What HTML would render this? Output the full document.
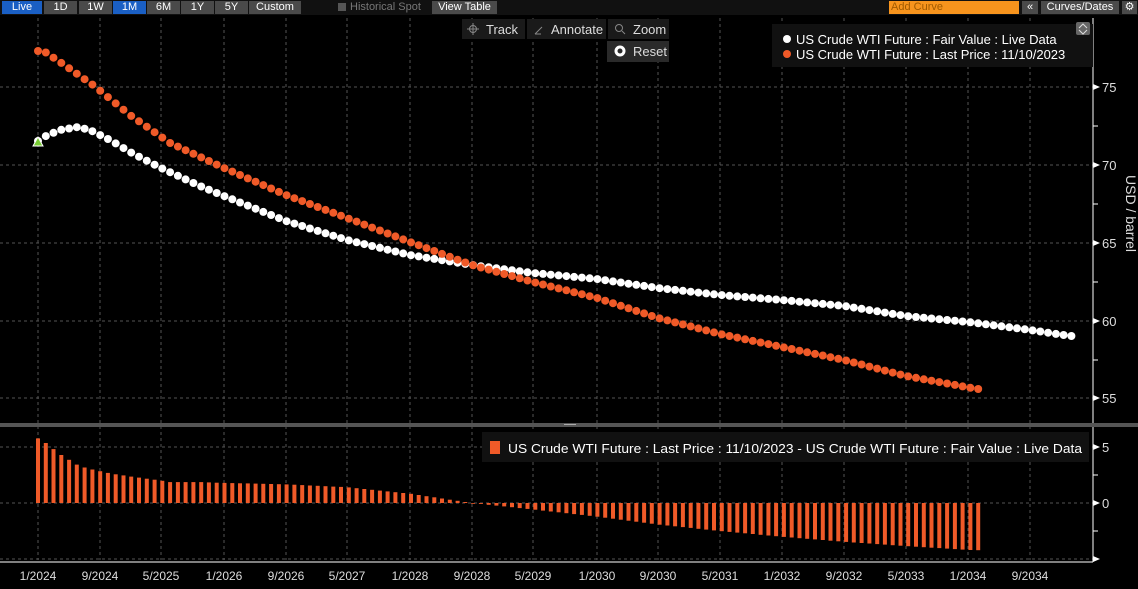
<!DOCTYPE html>
<html><head><meta charset="utf-8"><style>
body{margin:0;background:#000;width:1138px;height:589px;overflow:hidden;font-family:"Liberation Sans",sans-serif;}
.tb{position:absolute;top:0;left:0;width:1138px;height:15px;background:#111;}
.b{position:absolute;top:1px;height:13px;font-size:11px;line-height:13px;color:#fff;text-align:center;background:#4a4a4a;}
.blue{background:#1a5fc4;}
</style></head><body>
<div class="tb">
<div class="b blue" style="left:2px;width:40px">Live</div>
<div class="b" style="left:44px;width:33px">1D</div>
<div class="b" style="left:79px;width:33px">1W</div>
<div class="b blue" style="left:113px;width:33px">1M</div>
<div class="b" style="left:147px;width:33px">6M</div>
<div class="b" style="left:181px;width:33px">1Y</div>
<div class="b" style="left:215px;width:33px">5Y</div>
<div class="b" style="left:249px;width:52px">Custom</div>
<div class="b" style="left:302px;width:126px;background:#111;color:#777;text-align:left"><span style="display:inline-block;width:8px;height:8px;background:#555;margin:0 4px 0 36px;vertical-align:-1px"></span>Historical Spot</div>
<div class="b" style="left:432px;width:65px">View Table</div>
<div class="b" style="left:889px;width:130px;background:#f7941d;color:#a05a00;text-align:left;padding-left:2px;box-sizing:border-box">Add Curve</div>
<div class="b" style="left:1022px;width:16px">«</div>
<div class="b" style="left:1041px;width:78px">Curves/Dates</div>
<div class="b" style="left:1122px;width:15px">⚙</div>
</div>
<svg id="s" width="1138" height="589" style="position:absolute;top:0;left:0" font-family="Liberation Sans, sans-serif"></svg>
<script>
const s=document.getElementById('s');let h='';
const xs=[38,100,161,224,286,347,410,472,533,597,658,720,782,844,906,968,1030];
const lbl=['1/2024','9/2024','5/2025','1/2026','9/2026','5/2027','1/2028','9/2028','5/2029','1/2030','9/2030','5/2031','1/2032','9/2032','5/2033','1/2034','9/2034'];
xs.forEach((x,i)=>{h+=`<line x1="${x}" y1="18" x2="${x}" y2="560" stroke="#555" stroke-dasharray="3,3"/>`;h+=`<text x="${x}" y="580" fill="#ddd" font-size="12" text-anchor="middle">${lbl[i]}</text>`;});
[[75,87],[70,165],[65,243],[60,321],[55,398]].forEach(([v,y])=>{h+=`<line x1="0" y1="${y}" x2="1093" y2="${y}" stroke="#555" stroke-dasharray="3,3"/><path d="M1093 ${y-3}L1100 ${y}L1093 ${y+3}Z" fill="#fff"/><text x="1102" y="${y+5}" fill="#ddd" font-size="13">${v}</text>`;});
[126,204,282,360].forEach(y=>h+=`<line x1="1093" y1="${y}" x2="1098" y2="${y}" stroke="#fff"/>`);
[[5,447],[0,503]].forEach(([v,y])=>{h+=`<line x1="0" y1="${y}" x2="1093" y2="${y}" stroke="#555" stroke-dasharray="3,3"/><path d="M1093 ${y-3}L1100 ${y}L1093 ${y+3}Z" fill="#fff"/><text x="1102" y="${y+5}" fill="#ddd" font-size="13">${v}</text>`;});
h+=`<line x1="0" y1="559" x2="1093" y2="559" stroke="#555" stroke-dasharray="3,3"/><path d="M1093 556L1100 559L1093 562Z" fill="#fff"/><line x1="1093" y1="475" x2="1098" y2="475" stroke="#fff"/><line x1="1093" y1="531" x2="1098" y2="531" stroke="#fff"/>`;
h+=`<line x1="1093" y1="18" x2="1093" y2="562" stroke="#fff"/><line x1="0" y1="562" x2="1093" y2="562" stroke="#fff"/>`;
h+=`<rect x="0" y="423" width="1138" height="4" fill="#555"/><rect x="564" y="424" width="12" height="1" fill="#aaa"/>`;
h+=`<text x="1126" y="175" fill="#ddd" font-size="14" transform="rotate(90 1126 175)">USD / barrel</text>`;
function interp(p,x){for(let i=0;i<p.length-1;i++){if(x<=p[i+1][0]){const t=(x-p[i][0])/(p[i+1][0]-p[i][0]);return p[i][1]+t*(p[i+1][1]-p[i][1]);}}return p[p.length-1][1];}
const O=[[38,51],[45,52],[60,62],[93,85],[130,115],[170,143],[224,168],[286,195],[347,218],[410,242],[472,265],[533,282],[597,298],[658,318],[720,334],[782,347],[844,360],[906,376],[977,389]];
const W=[[38,141],[46,136],[60,130],[78,127],[90,130],[110,140],[130,152],[161,168],[200,186],[224,196],[286,221],[347,240],[410,255],[472,265],[533,273],[597,279],[658,288],[720,295],[782,300],[844,306],[906,316],[968,322],[1030,330],[1070,336]];
const st=7.77;let bars='',wd='',od='';
for(let i=0;;i++){const x=38+i*st;if(x>1072)break;const wy=interp(W,x);wd+=`<circle cx="${x.toFixed(1)}" cy="${wy.toFixed(1)}" r="4" fill="#fff"/>`;
if(x<=979){const oy=interp(O,x);od+=`<circle cx="${x.toFixed(1)}" cy="${oy.toFixed(1)}" r="4" fill="#f05a28"/>`;const d=(wy-oy)/15.6*11.2;const y0=503,y1=503-d;bars+=`<rect x="${(x-2).toFixed(1)}" y="${Math.min(y0,y1).toFixed(1)}" width="4" height="${Math.max(0.8,Math.abs(d)).toFixed(1)}" fill="#f05a28"/>`;}}
h+=bars+wd+od;
h+=`<path d="M33 146L38 137L43 146Z" fill="#7c3" stroke="#fff" stroke-width="1"/>`;
h+=`<rect x="772" y="24" width="321" height="43" fill="#111"/><circle cx="787" cy="39" r="4" fill="#fff"/><text x="796" y="44" fill="#fff" font-size="13">US Crude WTI Future : Fair Value : Live Data</text><circle cx="787" cy="54" r="4" fill="#f05a28"/><text x="796" y="59" fill="#fff" font-size="13">US Crude WTI Future : Last Price : 11/10/2023</text><rect x="1076" y="22" width="14" height="13" fill="#666" rx="2"/><path d="M1079 28L1083 24L1087 28M1079 30L1083 34L1087 30" stroke="#ddd" fill="none"/>`;
h+=`<rect x="482" y="432" width="607" height="30" fill="#111"/><rect x="490" y="441" width="10" height="13" fill="#f05a28"/><text x="508" y="453" fill="#fff" font-size="13" textLength="574" lengthAdjust="spacingAndGlyphs">US Crude WTI Future : Last Price : 11/10/2023 - US Crude WTI Future : Fair Value : Live Data</text>`;
h+=`<rect x="462" y="19" width="63" height="20" fill="#1a1a1a"/><text x="486" y="34" fill="#ddd" font-size="13">Track</text><circle cx="473" cy="29" r="3.5" stroke="#888" fill="none"/><path d="M473 23v12M467 29h12" stroke="#888"/>`;
h+=`<rect x="527" y="19" width="79" height="20" fill="#1a1a1a"/><text x="551" y="34" fill="#ddd" font-size="13">Annotate</text><path d="M535 34l7-7M535 34h6" stroke="#888"/>`;
h+=`<rect x="608" y="19" width="61" height="20" fill="#1a1a1a"/><text x="633" y="34" fill="#ddd" font-size="13">Zoom</text><circle cx="619" cy="28" r="3.5" stroke="#888" fill="none"/><path d="M622 31l3 3" stroke="#888"/>`;
h+=`<rect x="607" y="41" width="62" height="21" fill="#2a2a2a"/><circle cx="620" cy="51" r="4" stroke="#fff" stroke-width="3" fill="none"/><text x="633" y="56" fill="#ddd" font-size="13">Reset</text>`;
s.innerHTML=h;
</script>
</body></html>
